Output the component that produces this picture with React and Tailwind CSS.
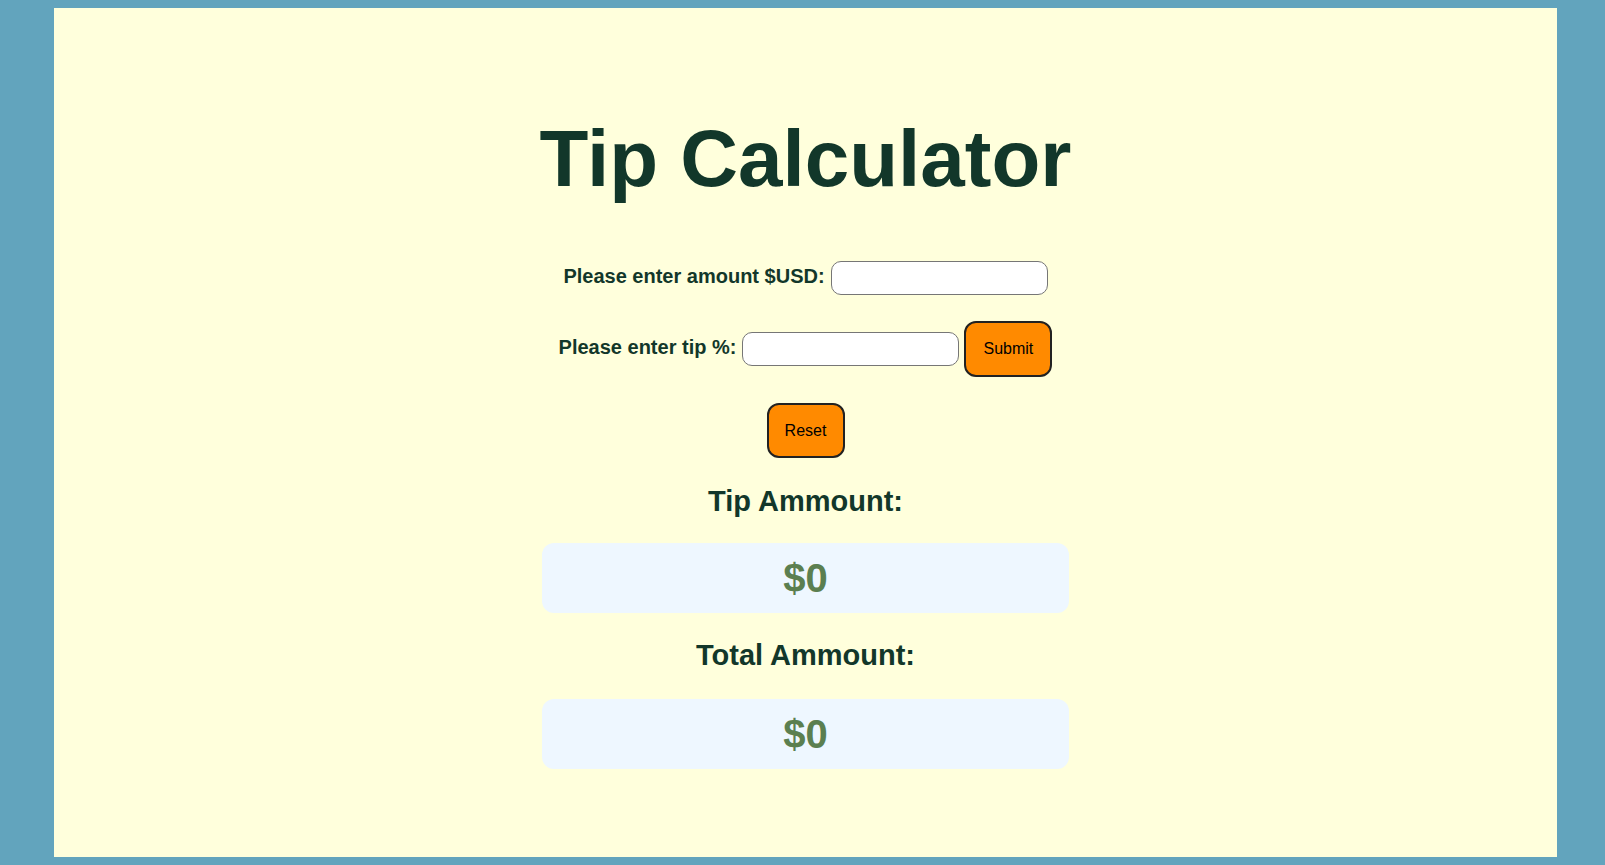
export default function App() {
  return (
    <div className="min-h-[865px] bg-[#62a4bd] py-2 font-['Liberation_Sans',Arial,sans-serif]">
      <div className="ml-[54px] w-[1503px] h-[849px] bg-[#ffffdc] pt-[105px] text-[#12372a] text-center">
        <h1 className="text-[80px] leading-[92px] font-bold">Tip Calculator</h1>

        <div className="mt-[56px] flex items-center justify-center h-[34px]">
          <label className="text-[20px] font-bold mr-[6px] pb-[4px]">Please enter amount $USD:</label>
          <input type="text" className="w-[217px] h-[34px] bg-white border border-[#767676] rounded-[10px] px-2 outline-none" />
        </div>

        <div className="mt-[26px] flex items-center justify-center h-[56px]">
          <label className="text-[20px] font-bold mr-[6px] pb-[4px]">Please enter tip %:</label>
          <input type="text" className="w-[217px] h-[34px] bg-white border border-[#767676] rounded-[10px] px-2 outline-none" />
          <button className="ml-[5px] w-[88px] h-[56px] bg-[#ff8a00] border-2 border-[#222] rounded-[12px] text-[16px] text-black">
            Submit
          </button>
        </div>

        <div className="mt-[26px] flex justify-center">
          <button className="w-[78px] h-[55px] bg-[#ff8a00] border-2 border-[#222] rounded-[12px] text-[16px] text-black">
            Reset
          </button>
        </div>

        <h2 className="mt-[27px] text-[29px] leading-[33px] font-bold">Tip Ammount:</h2>
        <div className="mt-[25px] mx-auto w-[527px] h-[70px] bg-[#eef7ff] rounded-[12px] flex items-center justify-center">
          <span className="text-[40px] font-bold text-[#5b7f50]">$0</span>
        </div>

        <h2 className="mt-[26px] text-[29px] leading-[33px] font-bold">Total Ammount:</h2>
        <div className="mt-[27px] mx-auto w-[527px] h-[70px] bg-[#eef7ff] rounded-[12px] flex items-center justify-center">
          <span className="text-[40px] font-bold text-[#5b7f50]">$0</span>
        </div>
      </div>
    </div>
  );
}
